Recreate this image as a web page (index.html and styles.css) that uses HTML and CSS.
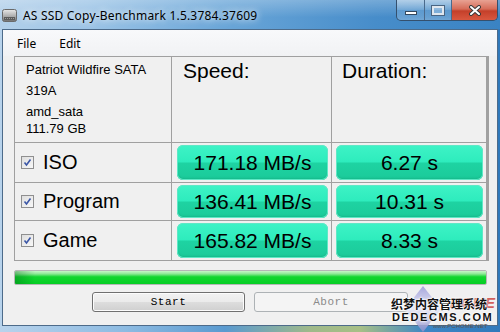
FILE: index.html
```html
<!DOCTYPE html>
<html lang="en">

<head>
    <meta charset="utf-8">
    <meta name="viewport" content="width=device-width, initial-scale=1.0">
    <title>AS SSD Copy-Benchmark</title>

    <link rel="stylesheet" href="styles.css">
</head>

<body>
    <div class="window">
        <header class="titlebar">
            <svg class="app-icon" width="15" height="13" viewBox="0 0 15 13">
                <defs>
                    <linearGradient id="hdd" x1="0" y1="0" x2="0" y2="1">
                        <stop offset="0" stop-color="#e8e8e8" />
                        <stop offset="0.6" stop-color="#a9a9a9" />
                        <stop offset="1" stop-color="#6d6d6d" />
                    </linearGradient>
                </defs>
                <rect x="0.5" y="0.5" width="14" height="12" rx="2" fill="url(#hdd)" stroke="#6a6a6a" />
                <rect x="2" y="8" width="11" height="3" fill="#5c5c5c" />
                <line x1="3" y1="9.5" x2="12" y2="9.5" stroke="#9a9a9a" stroke-dasharray="1 1" />
            </svg>
            <span class="title">AS SSD Copy-Benchmark 1.5.3784.37609</span>
            <div class="caption">
                <button class="cap min"><span></span></button>
                <button class="cap max"><span></span></button>
                <button class="cap close">
                    <svg width="14" height="11" viewBox="0 0 14 11">
                        <path d="M3 2 L11 9 M11 2 L3 9" stroke="#3a3a3a" stroke-width="4" stroke-linecap="round" />
                        <path d="M3 2 L11 9 M11 2 L3 9" stroke="#ffffff" stroke-width="2" stroke-linecap="round" />
                    </svg>
                </button>
            </div>
        </header>

        <main class="client">
            <nav class="menu">
                <span>File</span>
                <span>Edit</span>
            </nav>

            <section class="results">
                <div class="cell info">
                    <div class="info-a">Patriot Wildfire SATA<br>319A</div>
                    <div class="info-b">amd_sata<br>111.79 GB</div>
                </div>
                <div class="cell head">Speed:</div>
                <div class="cell head dur">Duration:</div>

                <div class="cell test"><span class="check"><svg width="9" height="9" viewBox="0 0 9 9"><path d="M1.5 4.5 L3.5 7 L7.5 1.5" fill="none" stroke="#3b56a6" stroke-width="1.6" /></svg></span>ISO</div>
                <div class="cell val"><div class="pill">171.18 MB/s</div></div>
                <div class="cell val dur"><div class="pill">6.27 s</div></div>

                <div class="cell test"><span class="check"><svg width="9" height="9" viewBox="0 0 9 9"><path d="M1.5 4.5 L3.5 7 L7.5 1.5" fill="none" stroke="#3b56a6" stroke-width="1.6" /></svg></span>Program</div>
                <div class="cell val"><div class="pill">136.41 MB/s</div></div>
                <div class="cell val dur"><div class="pill">10.31 s</div></div>

                <div class="cell test"><span class="check"><svg width="9" height="9" viewBox="0 0 9 9"><path d="M1.5 4.5 L3.5 7 L7.5 1.5" fill="none" stroke="#3b56a6" stroke-width="1.6" /></svg></span>Game</div>
                <div class="cell val"><div class="pill">165.82 MB/s</div></div>
                <div class="cell val dur"><div class="pill">8.33 s</div></div>
            </section>

            <div class="progress"><div class="bar"></div></div>

            <div class="actions">
                <button class="btn">Start</button>
                <button class="btn" disabled>Abort</button>
            </div>
        </main>

        <div class="watermark">
            <svg class="wm-diamond" width="36" height="46" viewBox="0 0 36 46">
                <defs>
                    <linearGradient id="dia" x1="0" y1="0" x2="0" y2="1">
                        <stop offset="0" stop-color="#9a9ad8" />
                        <stop offset="0.5" stop-color="#e6e6f6" />
                        <stop offset="1" stop-color="#8d8dcc" />
                    </linearGradient>
                </defs>
                <polygon points="18,0 36,23 18,46 0,23" fill="url(#dia)" opacity="0.85" />
            </svg>
            <span class="wm-home">HOME</span>
            <span class="wm-cn">织梦内容管理系统</span>
            <span class="wm-en">DEDECMS.COM</span>
            <span class="wm-small">www.PCHOME.NET</span>
        </div>
    </div>
</body>

</html>
```

FILE: styles.css
```css
body {
    margin: 0;
    width: 500px;
    height: 332px;
    overflow: hidden;
    font-family: "Liberation Sans", Arial, sans-serif;
}

.window {
    position: relative;
    width: 500px;
    height: 332px;
    background: linear-gradient(to right, #b8d3ec 0%, #8dbbe2 25%, #5a9ad0 45%, #9fb98a 62%, #a7bf86 72%, #3d86c5 85%, #3079bb 100%);
}

/* title bar */

.titlebar {
    height: 29px;
    display: flex;
    align-items: center;
    padding-left: 2px;
    background:
        linear-gradient(to bottom, rgba(255, 255, 255, 0.25), rgba(255, 255, 255, 0) 60%),
        linear-gradient(to right, #b3d0ea 0%, #9cc4e6 18%, #6aa6d8 45%, #478dca 75%, #3a83c3 100%);
}

.app-icon {
    margin-top: 1px;
}

.title {
    margin-left: 6px;
    margin-top: 1px;
    font-family: "Noto Sans", sans-serif;
    font-size: 12px;
    letter-spacing: 0.2px;
    color: #000;
    text-shadow: 0 0 6px rgba(255, 255, 255, 0.9), 0 0 10px rgba(255, 255, 255, 0.6);
}

.caption {
    display: flex;
    align-self: flex-start;
    margin-left: auto;
    margin-right: 2px;
    height: 20px;
    border: 1px solid #34506e;
    border-top: none;
    border-radius: 0 0 5px 5px;
    overflow: hidden;
}

.cap {
    border: none;
    padding: 0;
    display: flex;
    align-items: center;
    justify-content: center;
    background: linear-gradient(to bottom, rgba(255, 255, 255, 0.45), rgba(255, 255, 255, 0.15) 50%, rgba(255, 255, 255, 0.05) 51%, rgba(255, 255, 255, 0.25));
    border-right: 1px solid #4a6a8c;
}

.min {
    width: 28px;
}

.min span {
    display: block;
    width: 10px;
    height: 2px;
    margin-top: 6px;
    background: #fff;
    border: 1px solid #33485e;
}

.max {
    width: 27px;
}

.max span {
    display: block;
    width: 8px;
    height: 5px;
    border: 2px solid #dfe7ef;
    outline: 1px solid #4a6582;
    background: rgba(255, 255, 255, 0.2);
}

.close {
    width: 45px;
    border-right: none;
    background: linear-gradient(to bottom, #e8a293 0%, #d66c58 45%, #c4402a 55%, #d9573f 100%);
}

/* client area */

.client {
    height: 295px;
    margin: 0 2px 0 2px;
    border: 1px solid #4d6b8a;
    background: #f0f0f0;
}

.menu {
    height: 26px;
    display: flex;
    align-items: center;
    padding-left: 14px;
    gap: 23px;
    font-family: "Noto Sans", sans-serif;
    font-size: 12px;
    background: linear-gradient(to bottom, #f8f9fb, #f1f2f4);
}

.results {
    display: grid;
    grid-template-columns: 156px 159px 154px;
    grid-template-rows: 85px 39px 37px 39px;
    gap: 1px;
    width: 473px;
    margin-left: 11px;
    border: 1px solid #a0a0a0;
    background: #a0a0a0;
}

.cell {
    background: #f0f0f0;
}

.info {
    padding: 2px 0 0 11px;
    font-size: 13px;
}

.info-a {
    line-height: 21px;
}

.info-b {
    margin-top: 2px;
    line-height: 17px;
}

.head {
    padding: 2px 0 0 11px;
    font-size: 21px;
}

.head.dur {
    padding-left: 10px;
}

.test {
    display: flex;
    align-items: center;
    padding-left: 6px;
    font-size: 20px;
}

.check {
    width: 11px;
    height: 11px;
    margin-right: 9px;
    border: 1px solid #8f8f8f;
    background: linear-gradient(135deg, #dedede, #f8f8f8);
    display: flex;
    align-items: center;
    justify-content: center;
}

.val {
    padding: 2px 3px 2px 5px;
}

.val.dur {
    padding-left: 4px;
}

.pill {
    height: 100%;
    display: flex;
    align-items: center;
    justify-content: center;
    border-radius: 6px;
    font-size: 21px;
    background: linear-gradient(to bottom, #3ef3c6 0%, #2eecbd 48%, #1ed3a2 52%, #1bca9a 100%);
    box-shadow: inset 0 0 0 1px #5fe8c6, inset 0 -2px 2px rgba(0, 120, 80, 0.2);
}

.progress {
    width: 471px;
    height: 13px;
    margin: 9px 0 0 11px;
    border: 1px solid #b6b6b6;
    border-radius: 2px;
    overflow: hidden;
}

.bar {
    height: 100%;
    background:
        linear-gradient(to right, rgba(0, 90, 20, 0.35), rgba(0, 90, 20, 0) 20px),
        linear-gradient(to bottom, #c9f6c9 0%, #8ee996 22%, #12d62f 45%, #05ce24 100%);
}

.actions {
    display: flex;
    justify-content: center;
    gap: 9px;
    margin-top: 7px;
}

.btn {
    width: 153px;
    height: 20px;
    padding: 0;
    font-family: "Liberation Mono", monospace;
    font-size: 11px;
    letter-spacing: 0.5px;
    color: #000;
    border: 1px solid #707070;
    border-radius: 3px;
    background: linear-gradient(to bottom, #f2f2f2 0%, #ebebeb 48%, #dddddd 52%, #cfcfcf 100%);
    box-shadow: inset 0 0 0 1px #fcfcfc;
}

.btn:disabled {
    width: 154px;
    color: #8a8a8a;
    border-color: #adb2b5;
    background: #f4f4f4;
    box-shadow: none;
}

/* watermark overlay */

.watermark {
    position: absolute;
    left: 388px;
    top: 284px;
    width: 112px;
    height: 48px;
    overflow: hidden;
}

.wm-diamond {
    position: absolute;
    left: 17px;
    top: 2px;
}

.wm-home {
    position: absolute;
    left: 62px;
    top: 10px;
    font-size: 15px;
    font-weight: bold;
    font-style: italic;
    color: #c9302a;
    opacity: 0.75;
}

.wm-cn {
    position: absolute;
    left: 3px;
    top: 11px;
    font-family: "Noto Sans CJK SC", sans-serif;
    font-size: 12px;
    font-weight: bold;
    color: #111;
    text-shadow: 0 0 2px #fff, 0 0 2px #fff, 0 0 3px #fff;
}

.wm-en {
    position: absolute;
    left: 4px;
    top: 27px;
    font-size: 11px;
    font-weight: bold;
    letter-spacing: 1.6px;
    color: #111;
    text-shadow: 0 0 2px #fff, 0 0 2px #fff, 0 0 3px #fff;
}

.wm-small {
    position: absolute;
    left: 45px;
    top: 39px;
    font-size: 6px;
    color: #555;
}
```
